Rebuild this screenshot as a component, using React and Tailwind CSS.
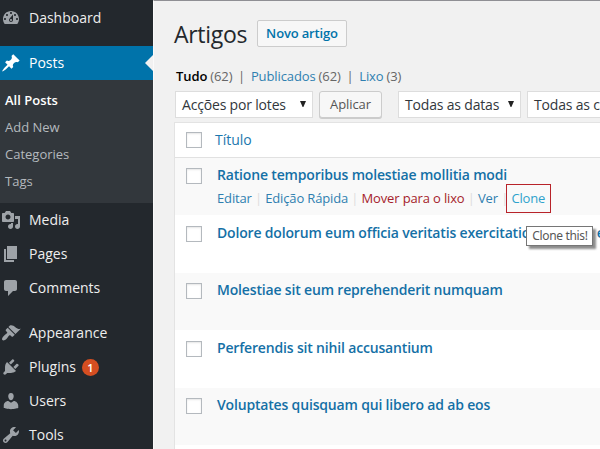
const icons = {
  dashboard:
    'M3.76 17h12.48c1.1-1.37 1.76-3.11 1.76-5 0-4.42-3.58-8-8-8s-8 3.58-8 8c0 1.89.66 3.63 1.76 5zM10 5c.55 0 1 .45 1 1s-.45 1-1 1-1-.45-1-1 .45-1 1-1zM5 8c0-.55.45-1 1-1s1 .45 1 1-.45 1-1 1-1-.45-1-1zm10 0c0 .55-.45 1-1 1s-1-.45-1-1 .45-1 1-1 1 .45 1 1zm-6.37 3.55L12 7.5v5.5c0 1.1-.9 2-2 2s-2-.9-2-2c0-.57.24-1.08.63-1.45zM4 11c.55 0 1 .45 1 1s-.45 1-1 1-1-.45-1-1 .45-1 1-1zm12 0c.55 0 1 .45 1 1s-.45 1-1 1-1-.45-1-1 .45-1 1-1zm-5 2c0-.55-.45-1-1-1s-1 .45-1 1 .45 1 1 1 1-.45 1-1z',
  posts:
    'M10.44 3.02l1.82-1.82 6.36 6.35-1.83 1.82c-1.05-.68-2.48-.57-3.41.36l-.75.75c-.92.93-1.04 2.35-.35 3.41l-1.83 1.82-2.41-2.41-2.8 2.79c-.42.42-3.38 2.71-3.8 2.29s1.86-3.39 2.28-3.81l2.79-2.79L4.1 9.36l1.83-1.82c1.05.69 2.48.57 3.4-.36l.75-.75c.93-.92 1.05-2.35.36-3.41z',
  media:
    'M13 11V4c0-.55-.45-1-1-1h-1.67L9 1H5L3.67 3H2c-.55 0-1 .45-1 1v7c0 .55.45 1 1 1h10c.55 0 1-.45 1-1zM7 4.5c1.38 0 2.5 1.12 2.5 2.5S8.38 9.5 7 9.5 4.5 8.38 4.5 7 5.62 4.5 7 4.5zM14 6h5v10.5c0 1.38-1.12 2.5-2.5 2.5S14 17.88 14 16.5s1.12-2.5 2.5-2.5c.17 0 .34.02.5.05V9h-3V6zm-4 8.05V13h2v3.5c0 1.38-1.12 2.5-2.5 2.5S7 17.88 7 16.5 8.12 14 9.5 14c.17 0 .34.02.5.05z',
  pages: 'M6 15V2h10v13H6zm-1 1h8v2H3V5h2v11z',
  comments:
    'M5 2h9c1.1 0 2 .9 2 2v7c0 1.1-.9 2-2 2h-2l-5 5v-5H5c-1.1 0-2-.9-2-2V4c0-1.1.9-2 2-2z',
  appearance:
    'M14.48 11.06L7.41 3.99l1.5-1.5c.5-.56 2.3-.47 3.51.32 1.21.8 1.43 1.28 2.91 2.1 1.18.64 2.45 1.26 4.45.85zm-.71.71L6.7 4.7 4.93 6.47c-.39.39-.39 1.02 0 1.41l1.06 1.06c.39.39.39 1.03 0 1.42-.6.6-1.43 1.11-2.21 1.69-.35.26-.7.53-1.01.84C1.43 14.23.4 16.08 1.4 17.07c.99 1 2.84-.03 4.18-1.36.31-.31.58-.66.85-1.02.57-.78 1.08-1.61 1.69-2.21.39-.39 1.02-.39 1.41 0l1.06 1.06c.39.39 1.02.39 1.41 0z',
  plugins:
    'M13.11 4.36L9.87 7.6 8 5.73l3.24-3.24c.35-.34 1.05-.2 1.56.32.52.51.66 1.21.31 1.55zm-8 1.77l.91-1.12 9.01 9.01-1.19.84c-.71.71-2.63 1.16-3.82 1.16H6.14L4.9 17.26c-.59.59-1.54.59-2.12 0-.59-.58-.59-1.53 0-2.12l1.24-1.24v-3.88c0-1.13.4-3.19 1.09-3.89zm7.26 3.97l3.24-3.24c.34-.35 1.04-.21 1.55.31.52.51.66 1.21.31 1.55l-3.24 3.25z',
  users:
    'M10 9.25c-2.27 0-2.73-3.44-2.73-3.44C7 4.02 7.82 2 9.97 2c2.16 0 2.98 2.02 2.71 3.81 0 0-.41 3.44-2.68 3.44zm0 2.57L12.72 10c2.39 0 4.52 2.33 4.52 4.53v2.49s-3.65 1.13-7.24 1.13c-3.65 0-7.24-1.13-7.24-1.13v-2.49c0-2.25 1.94-4.48 4.47-4.48z',
  tools:
    'M16.68 9.77c-1.34 1.34-3.3 1.67-4.95.99l-5.41 6.52c-.99.99-2.59.99-3.58 0s-.99-2.59 0-3.57l6.52-5.42c-.68-1.65-.35-3.61.99-4.95 1.28-1.28 3.12-1.62 4.72-1.06l-2.89 2.89 2.82 2.82 2.86-2.87c.53 1.58.18 3.39-1.08 4.65zM3.81 16.21c.4.39 1.04.39 1.43 0 .4-.4.4-1.04 0-1.43-.39-.4-1.03-.4-1.43 0-.39.39-.39 1.03 0 1.43z',
};

function MenuItem({ icon, label, badge, active }) {
  return (
    <a
      className={`relative flex h-[34px] shrink-0 items-center pl-px text-sm ${
        active ? 'bg-[#0073aa] text-white' : 'text-[#eeeeee]'
      }`}
    >
      <svg
        viewBox="0 0 20 20"
        fillRule="evenodd"
        className={`size-5 shrink-0 ${active ? 'fill-white' : 'fill-[#9ea3a8]'}`}
      >
        <path d={icons[icon]} />
      </svg>
      <span className={`ml-2 ${icon === 'dashboard' ? 'pt-0.5' : ''}`}>{label}</span>
      {badge && (
        <span className="ml-1.5 flex size-[17px] items-center justify-center rounded-full bg-[#d54e21] text-[11px] leading-none font-semibold text-white">
          {badge}
        </span>
      )}
      {active && (
        <span className="absolute top-[9px] right-0 border-y-8 border-r-8 border-y-transparent border-r-[#f1f1f1]" />
      )}
    </a>
  );
}

function Sidebar() {
  return (
    <nav className="flex w-[153px] shrink-0 flex-col bg-[#23282d]">
      <MenuItem icon="dashboard" label="Dashboard" />
      <div className="h-3 shrink-0" />
      <MenuItem icon="posts" label="Posts" active />
      <ul className="h-[123px] shrink-0 bg-[#32373c] pt-[7px] pl-[5px] text-[13px] leading-[27px] text-[#b4b9be]">
        <li className="font-semibold text-white">All Posts</li>
        <li>Add New</li>
        <li>Categories</li>
        <li>Tags</li>
      </ul>
      <MenuItem icon="media" label="Media" />
      <MenuItem icon="pages" label="Pages" />
      <MenuItem icon="comments" label="Comments" />
      <div className="h-[11px] shrink-0" />
      <MenuItem icon="appearance" label="Appearance" />
      <MenuItem icon="plugins" label="Plugins" badge="1" />
      <MenuItem icon="users" label="Users" />
      <MenuItem icon="tools" label="Tools" />
    </nav>
  );
}

function Checkbox() {
  return <span className="size-4 shrink-0 border border-[#b4b9be] bg-white shadow-[inset_0_1px_2px_rgba(0,0,0,0.1)]" />;
}

function Select({ children, className }) {
  return (
    <div className={`flex h-[27px] shrink-0 items-center justify-between border border-[#dddddd] bg-white pr-1.5 pl-1.5 text-sm tracking-[-0.18px] whitespace-nowrap text-[#32373c] ${className}`}>
      <span>{children}</span>
      <svg viewBox="0 0 6 6" className="mb-0.5 size-1.5 shrink-0 fill-[#222222]">
        <path d="M0 0h6L3.4 6h-.8z" />
      </svg>
    </div>
  );
}

const Bar = ({ className }) => <span className={className}>|</span>;

function RowActions() {
  return (
    <div className="flex items-center text-[13px] leading-[18px] tracking-[-0.15px] text-[#2f7fb0]">
      <span>Editar</span>
      <Bar className="w-[13.5px] text-center text-[#dddddd]" />
      <span>Edição Rápida</span>
      <Bar className="w-[13.5px] text-center text-[#dddddd]" />
      <span className="text-[#a51c2a]">Mover para o lixo</span>
      <Bar className="w-[13.5px] text-center text-[#dddddd]" />
      <span>Ver</span>
      <Bar className="w-[13.5px] text-center text-[#dddddd]" />
      <span className="relative text-[#2ea2cc]">
        Clone
        <span className="absolute -top-[5px] -left-[5px] h-[29px] w-[45px] border border-[#b8232a]" />
        <span className="absolute top-[37px] left-[15px] z-10 flex h-5 w-[67px] items-center justify-center border border-[#767676] bg-white font-['Noto_Sans',sans-serif] text-xs tracking-[-0.35px] whitespace-nowrap text-[#575757] shadow-[3px_3px_2px_rgba(0,0,0,0.45)]">
          Clone this!
        </span>
      </span>
    </div>
  );
}

function Row({ title, className, children }) {
  return (
    <div className={`flex shrink-0 items-start pl-[11px] ${className}`}>
      <Checkbox />
      <div className="-mt-[3px] ml-[15px] whitespace-nowrap">
        <div className="text-sm leading-5 font-semibold tracking-[-0.17px] text-[#1470a6]">{title}</div>
        {children}
      </div>
    </div>
  );
}

export default function App() {
  return (
    <div className="flex h-[449px] w-[600px] overflow-hidden bg-[#f1f1f1] font-['Open_Sans',sans-serif]">
      <Sidebar />
      <main className="flex min-w-0 flex-1 flex-col overflow-hidden border-t border-l border-t-[#8f8f94] border-l-[#fafafa] pl-5">
        <header className="mt-[19px] flex h-[27px] shrink-0 items-center">
          <h1 className="w-[83px] text-[23px] leading-7 tracking-[-0.3px] text-[#23282d]">Artigos</h1>
          <button className="h-[27px] w-[90px] rounded-xs border border-[#cccccc] bg-[#f7f7f7] text-[13px] font-semibold tracking-[-0.15px] text-[#0073aa]">
            Novo artigo
          </button>
        </header>
        <div className="mt-[21px] flex h-[18px] shrink-0 items-center pl-0.5 text-[13px] tracking-[-0.1px] text-[#666666]">
          <b className="mr-[3px] font-semibold text-black">Tudo</b>
          <span>(62)</span>
          <Bar className="w-[18.5px] text-center" />
          <span className="mr-[3px] text-[#2f7fb0]">Publicados</span>
          <span>(62)</span>
          <Bar className="w-[18.5px] text-center" />
          <span className="mr-[3px] text-[#2f7fb0]">Lixo</span>
          <span>(3)</span>
        </div>
        <div className="mt-[5px] flex shrink-0 items-center pl-px">
          <Select className="w-[138px]">Acções por lotes</Select>
          <button className="ml-1.5 h-[27px] w-[63px] shrink-0 rounded-[3px] border border-[#cccccc] bg-[#f7f7f7] text-[13px] tracking-[-0.1px] text-[#555555] shadow-[0_1px_0_#cccccc]">
            Aplicar
          </button>
          <Select className="ml-4 w-[123px]">Todas as datas</Select>
          <Select className="ml-1.5 w-[160px]">Todas as categorias</Select>
        </div>
        <section className="mt-1 flex w-[460px] shrink-0 flex-col border border-[#e3e3e3] bg-white">
          <div className="flex h-[35px] shrink-0 items-center border-b border-[#e1e1e1] pl-[11px] text-sm text-[#1b77ae]">
            <Checkbox />
            <span className="ml-[13px]">Título</span>
          </div>
          <Row title="Ratione temporibus molestiae mollitia modi" className="h-[57px] bg-[#f9f9f9] pt-2.5">
            <div className="mt-1">
              <RowActions />
            </div>
          </Row>
          <Row title="Dolore dolorum eum officia veritatis exercitationem nam et" className="h-[58px] pt-[11px]" />
          <Row title="Molestiae sit eum reprehenderit numquam" className="h-[57px] bg-[#f9f9f9] pt-2.5" />
          <Row title="Perferendis sit nihil accusantium" className="h-[58px] pt-[11px]" />
          <Row title="Voluptates quisquam qui libero ad ab eos" className="h-[57px] bg-[#f9f9f9] pt-2.5" />
          <div className="h-10 shrink-0" />
        </section>
      </main>
    </div>
  );
}
